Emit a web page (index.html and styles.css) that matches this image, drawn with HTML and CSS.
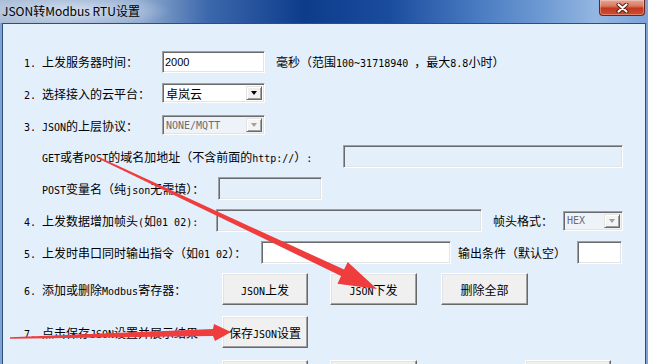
FILE: index.html
```html
<!DOCTYPE html>
<html lang="zh-CN">

<head>
  <meta charset="UTF-8" />
  <title>JSON转Modbus RTU设置</title>
  <link rel="stylesheet" href="styles.css">
</head>

<body>
  <div class="window">
    <div class="titlebar">
      <span class="title">JSON转Modbus RTU设置</span>
      <button class="close" aria-label="关闭">
        <svg width="13" height="10" viewBox="0 0 13 10">
          <path d="M2.5 1.5 L10.5 8.5 M10.5 1.5 L2.5 8.5" stroke="#4a1a12" stroke-width="4" stroke-linecap="round" />
          <path d="M2.5 1.5 L10.5 8.5 M10.5 1.5 L2.5 8.5" stroke="#fff" stroke-width="2.2" stroke-linecap="round" />
        </svg>
      </button>
    </div>

    <div class="client">
      <div class="row row-1">
        <span class="label w-138"><span class="num">1.</span>上发服务器时间：</span>
        <input class="field w-103 h-22" type="text" value="2000">
        <span class="note">毫秒（范围<span class="en">100~31718940 </span>，最大<span class="en">8.8</span>小时）</span>
      </div>

      <div class="row row-2">
        <span class="label w-138"><span class="num">2.</span>选择接入的云平台：</span>
        <div class="combo w-103">
          <span class="combo-value">卓岚云</span>
          <span class="combo-btn"><i class="caret"></i></span>
        </div>
      </div>

      <div class="row row-3">
        <span class="label w-138"><span class="num">3.</span><span class="en">JSON</span>的上层协议：</span>
        <div class="combo combo-off w-103">
          <span class="combo-value en">NONE/MQTT</span>
          <span class="combo-btn"><i class="caret"></i></span>
        </div>
      </div>

      <div class="row row-4 indent">
        <span class="label w-301"><span class="en">GET</span>或者<span class="en">POST</span>的域名加地址（不含前面的<span class="en">http://</span>）<span class="en">:</span></span>
        <input class="field field-off w-280" type="text" disabled>
      </div>

      <div class="row row-5 indent">
        <span class="label w-176"><span class="en">POST</span>变量名（纯<span class="en">json</span>无需填）：</span>
        <input class="field field-off w-104" type="text" disabled>
      </div>

      <div class="row row-6">
        <span class="label w-192"><span class="num">4.</span>上发数据增加帧头<span class="en">(</span>如<span class="en">01 02):</span></span>
        <input class="field field-off w-266" type="text" disabled>
        <span class="label gap-11 w-70">帧头格式：</span>
        <div class="combo combo-off w-60">
          <span class="combo-value en">HEX</span>
          <span class="combo-btn"><i class="caret"></i></span>
        </div>
      </div>

      <div class="row row-7">
        <span class="label w-237"><span class="num">5.</span>上发时串口同时输出指令（如<span class="en">01 02</span>）：</span>
        <input class="field w-190" type="text">
        <span class="label gap-7 w-119">输出条件（默认空）</span>
        <input class="field w-45" type="text">
      </div>

      <div class="row row-8">
        <span class="label w-198"><span class="num">6.</span>添加或删除<span class="en">Modbus</span>寄存器：</span>
        <button class="btn w-86"><span class="en">JSON</span>上发</button>
        <button class="btn w-87 gap-22"><span class="en">JSON</span>下发</button>
        <button class="btn w-87 gap-24">删除全部</button>
      </div>

      <div class="row row-9">
        <span class="label w-198"><span class="num">7.</span>点击保存<span class="en">JSON</span>设置并展示结果</span>
        <button class="btn w-86">保存<span class="en">JSON</span>设置</button>
      </div>

      <div class="row row-10">
        <span class="label w-198"></span>
        <button class="btn w-86"></button>
        <button class="btn w-87 gap-22"></button>
        <button class="btn w-86 gap-108"></button>
      </div>
    </div>

    <!-- red arrows drawn on top of the screenshot -->
    <svg class="arrows" width="648" height="364" viewBox="0 0 648 364">
      <polygon points="97.3,156.3 344.1,269.6 347.7,261.9 377,289 337.5,283.7 341.1,276 96.7,157.7" />
      <polygon points="10,337.2 213,329 214,324 231,332 215,341 213,336 10,338.8" />
    </svg>
  </div>
</body>

</html>
```

FILE: styles.css
```css
* {
  box-sizing: border-box;
}

body {
  margin: 0;
  background-color: #7fa2d3;
  color: #000;
  font-family: "Noto Sans CJK SC", sans-serif;
  font-size: 12px;
  overflow: hidden;
}

.window {
  position: relative;
  width: 648px;
  height: 364px;
  display: flex;
  flex-direction: column;
  overflow: hidden;
}

/* title bar */

.titlebar {
  flex: none;
  height: 23px;
  display: flex;
  justify-content: space-between;
  align-items: flex-start;
  background:
    radial-gradient(ellipse 100px 17px at 72px 11px, rgba(214, 225, 239, 0.95), rgba(214, 225, 239, 0)),
    linear-gradient(90deg, #a9bcd6 0%, #8ea9cf 22%, #3c68ac 32%, #0d3c8b 47%, #1a4c9e 60%, #4a7cc2 74%, #6f9bd3 84%, #94b6e2 92%, #7ca3d8 100%);
}

.title {
  padding-left: 2px;
  line-height: 22px;
  font-size: 12px;
}

.close {
  width: 46px;
  height: 16px;
  margin-right: 3px;
  padding: 0;
  display: flex;
  align-items: center;
  justify-content: center;
  border: 1px solid #6e2418;
  border-top: none;
  border-radius: 0 0 4px 4px;
  background: linear-gradient(#e7a493 0%, #d97a63 40%, #c0391f 55%, #cf4e33 100%);
  box-shadow: inset 0 0 0 1px rgba(255, 255, 255, 0.3);
}

/* client area */

.client {
  flex: 1;
  min-height: 0;
  margin: 0 2px;
  padding: 22px 0 0 21px;
  background-color: #e4effc;
  border: 1px solid #2d4f80;
  border-bottom: none;
  overflow: hidden;
}

.row {
  display: flex;
  align-items: center;
}

.row-1 { height: 31px; }
.row-2 { height: 32px; }
.row-3 { height: 32px; }
.row-4 { height: 31px; }
.row-5 { height: 32px; }
.row-6 { height: 33px; }
.row-7 { height: 31px; }
.row-8 { height: 42px; }
.row-9 { height: 44px; }
.row-10 { height: 44px; }

.indent {
  padding-left: 18px;
}

.label {
  flex: none;
  white-space: nowrap;
}

.num {
  display: inline-block;
  width: 18px;
  font-family: "DejaVu Sans Mono", monospace;
  font-size: 10px;
}

.en {
  font-family: "DejaVu Sans Mono", monospace;
  font-size: 10px;
}

.note {
  margin-left: 11px;
  white-space: nowrap;
}

/* widths */

.w-45 { width: 45px; }
.w-60 { width: 60px; }
.w-70 { width: 70px; }
.w-86 { width: 86px; }
.w-87 { width: 87px; }
.w-103 { width: 103px; }
.w-104 { width: 104px; }
.w-119 { width: 119px; }
.w-138 { width: 138px; }
.w-176 { width: 176px; }
.w-190 { width: 190px; }
.w-192 { width: 192px; }
.w-198 { width: 198px; }
.w-237 { width: 237px; }
.w-266 { width: 266px; }
.w-280 { width: 280px; }
.w-301 { width: 301px; }

.gap-7 { margin-left: 7px; }
.gap-11 { margin-left: 11px; }
.gap-22 { margin-left: 22px; }
.gap-24 { margin-left: 24px; }
.gap-108 { margin-left: 108px; }

/* text boxes */

.field {
  flex: none;
  height: 23px;
  margin: 0;
  padding: 0 2px;
  background-color: #fff;
  border: 1px solid;
  border-color: #a0a0a0 #fff #fff #a0a0a0;
  box-shadow: inset 1px 1px 0 #6a6a6a, inset -1px -1px 0 #e3e3e3;
  font-family: "Liberation Sans", sans-serif;
  font-size: 11px;
  color: #000;
  outline: none;
}

.h-22 {
  height: 22px;
}

.field-off {
  background-color: #e4effc;
}

/* drop-down boxes */

.combo {
  flex: none;
  height: 20px;
  display: flex;
  align-items: stretch;
  padding: 2px;
  background-color: #fff;
  border: 1px solid;
  border-color: #a0a0a0 #fff #fff #a0a0a0;
  box-shadow: inset 1px 1px 0 #6a6a6a, inset -1px -1px 0 #e3e3e3;
}

.combo-value {
  flex: 1;
  display: flex;
  align-items: center;
  padding-left: 1px;
  white-space: nowrap;
}

.combo-btn {
  width: 16px;
  display: flex;
  align-items: center;
  justify-content: center;
  background-color: #f0f0f0;
  border: 1px solid;
  border-color: #e3e3e3 #6a6a6a #6a6a6a #e3e3e3;
  box-shadow: inset 1px 1px 0 #fff, inset -1px -1px 0 #a0a0a0;
}

.caret {
  width: 0;
  height: 0;
  border-left: 3.5px solid transparent;
  border-right: 3.5px solid transparent;
  border-top: 4px solid #000;
}

.combo-off {
  background-color: #eef3f9;
}

.combo-off .combo-value {
  color: #6d6d6d;
}

.combo-off .combo-btn {
  background-color: #f4f4f4;
}

.combo-off .caret {
  border-top-color: #a0a0a0;
}

/* buttons */

.btn {
  flex: none;
  height: 32px;
  padding: 0;
  background-color: #f0f0f0;
  border: 1px solid;
  border-color: #fff #696969 #696969 #fff;
  box-shadow: inset -1px -1px 0 #a0a0a0, inset 1px 1px 0 #e3e3e3;
  font-family: "Noto Sans CJK SC", sans-serif;
  font-size: 12px;
  color: #000;
}

/* annotation overlay */

.arrows {
  position: absolute;
  left: 0;
  top: 0;
  pointer-events: none;
  fill: #ef3c3c;
}
```
